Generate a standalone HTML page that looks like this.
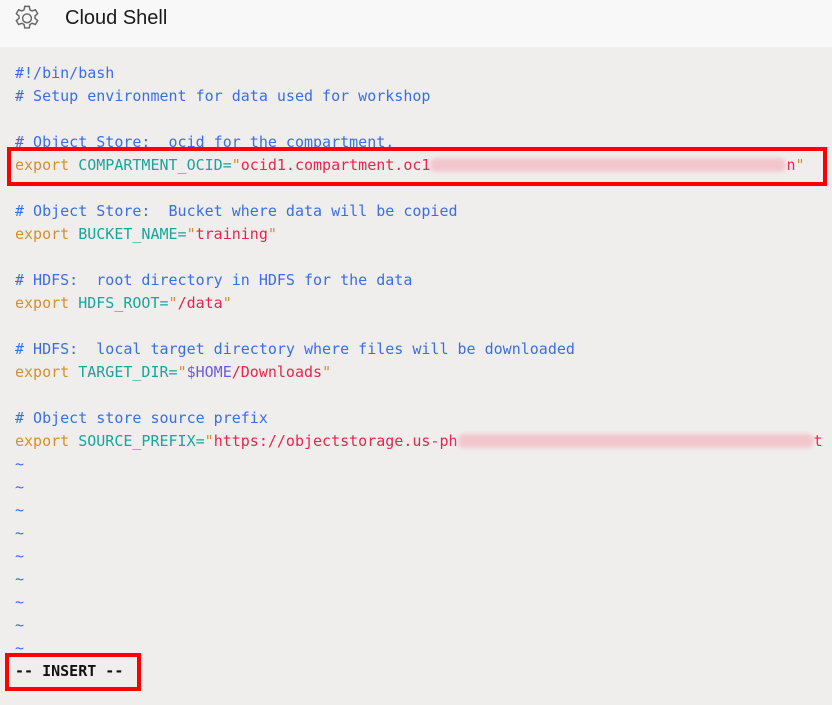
<!DOCTYPE html>
<html><head><meta charset="utf-8"><style>
html,body{margin:0;padding:0;width:832px;height:705px;overflow:hidden;background:#f0eeed;}
.hdr{position:absolute;left:0;top:0;width:832px;height:47px;background:#f8f8f8;}
.hdr .t{position:absolute;left:65px;top:7px;font:20px "Liberation Sans",sans-serif;color:#1a1a1a;}
pre{position:absolute;left:15px;top:62px;margin:0;font:15px/23px "DejaVu Sans Mono","Liberation Mono",monospace;color:#3a6ee6;}
.c{color:#3a6ee6}.e{color:#d38f2d}.v{color:#17a59c}.s{color:#e5264c}.p{color:#6b5dd3}.q{color:#d38f2d}
.blur{display:inline-block;height:14px;vertical-align:-2px;background:#f2c6cd;border-radius:6px;filter:blur(2px);}
.box{position:absolute;border:4px solid #ff0000;box-sizing:border-box;}
.ins{color:#111;font-weight:bold;}
</style></head><body>
<div class="hdr">
<svg style="position:absolute;left:11px;top:3px" width="32" height="32" viewBox="0 0 24 24" fill="none" stroke="#666" stroke-width="1.1"><path d="M10.3 2.5h3.4l.5 2.6 1.6.9 2.5-.9 1.7 2.9-2 1.7v1.8l2 1.7-1.7 2.9-2.5-.9-1.6.9-.5 2.6h-3.4l-.5-2.6-1.6-.9-2.5.9-1.7-2.9 2-1.7v-1.8l-2-1.7 1.7-2.9 2.5.9 1.6-.9z"/><circle cx="12" cy="11.5" r="3.3"/></svg>
<div class="t">Cloud Shell</div>
</div>
<pre><span class="c">#!/bin/bash</span>
<span class="c"># Setup environment for data used for workshop</span>

<span class="c"># Object Store:  ocid for the compartment.</span>
<span class="e">export</span> <span class="v">COMPARTMENT_OCID=</span><span class="q">"</span><span class="s">ocid1.compartment.oc1</span><span class="blur" style="width:356px"></span><span class="s">n</span><span class="q">"</span>

<span class="c"># Object Store:  Bucket where data will be copied</span>
<span class="e">export</span> <span class="v">BUCKET_NAME=</span><span class="q">"</span><span class="s">training</span><span class="q">"</span>

<span class="c"># HDFS:  root directory in HDFS for the data</span>
<span class="e">export</span> <span class="v">HDFS_ROOT=</span><span class="q">"</span><span class="s">/data</span><span class="q">"</span>

<span class="c"># HDFS:  local target directory where files will be downloaded</span>
<span class="e">export</span> <span class="v">TARGET_DIR=</span><span class="q">"</span><span class="p">$HOME</span><span class="s">/Downloads</span><span class="q">"</span>

<span class="c"># Object store source prefix</span>
<span class="e">export</span> <span class="v">SOURCE_PREFIX=</span><span class="q">"</span><span class="s">https://objectstorage.us-ph</span><span class="blur" style="width:356px"></span><span class="s">t</span>
~
~
~
~
~
~
~
~
~
<span class="ins">-- INSERT --</span></pre>
<div class="box" style="left:7px;top:147px;width:820px;height:39px"></div>
<div class="box" style="left:5px;top:653px;width:136px;height:38px"></div>
</body></html>
